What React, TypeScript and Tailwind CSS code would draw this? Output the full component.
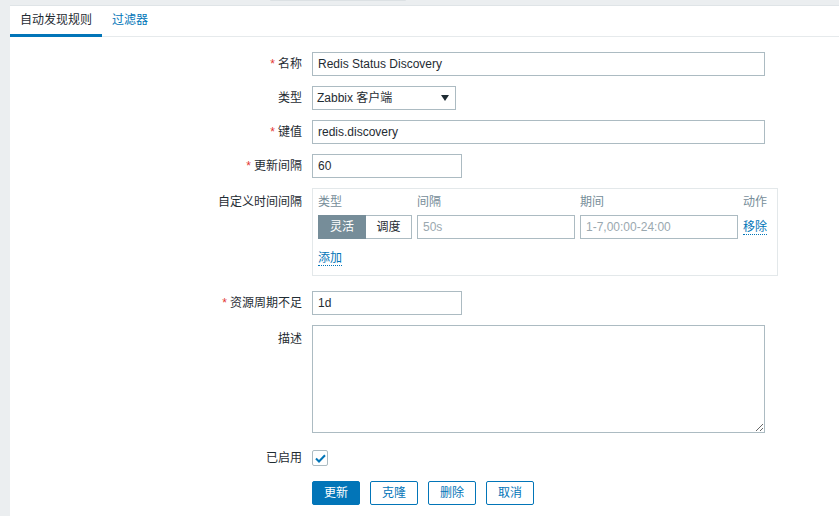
import { useState } from "react";

const FONT = { fontFamily: '"Liberation Sans", Arial, "Noto Sans CJK SC", sans-serif' };

function Label({ text, required, top }: { text: string; required?: boolean; top?: boolean }) {
  return (
    <div className={`w-[292px] shrink-0 pr-0 text-right text-[#1f2c33] leading-[24px] ${top ? "pt-[2px]" : ""}`}>
      {required && <span className="mr-[3px] text-[#e33734]">*</span>}
      {text}
    </div>
  );
}

function TextInput({ value, width, placeholder }: { value?: string; width: string; placeholder?: string }) {
  return (
    <div
      className={`${width} h-[24px] border border-[#acbbc2] bg-white px-[5px] leading-[22px] ${
        value ? "text-[#1f2c33]" : "text-[#9aa8af]"
      }`}
    >
      {value || placeholder}
    </div>
  );
}

export default function App() {
  const [enabled, setEnabled] = useState(true);
  const [mode, setMode] = useState<"flex" | "sched">("flex");

  return (
    <div className="min-h-[516px] w-[839px] overflow-hidden bg-[#ebeef0] text-[12px]" style={FONT}>
      <div className="h-[5px]">
        <div className="ml-[270px] h-[1px] w-[136px] rounded-b bg-[#dce1e4]" />
      </div>
      <div className="ml-[10px] min-h-[511px] border-t border-[#dfe4e7] bg-white">
        {/* tabs */}
        <div className="flex h-[31px] border-b border-[#e6eaec]">
          <div className="-mb-[1px] flex h-[31px] items-center border-b-[3px] border-[#0275b8] px-[10px] pb-[0px] text-[#1f2c33]">
            自动发现规则
          </div>
          <div className="flex h-[28px] items-center px-[10px] text-[#0275b8]">过滤器</div>
        </div>

        <div className="pt-[15px]">
          <div className="mb-[10px] flex gap-[10px]">
            <Label text="名称" required />
            <TextInput value="Redis Status Discovery" width="w-[453px]" />
          </div>

          <div className="mb-[10px] flex gap-[10px]">
            <Label text="类型" />
            <div className="flex h-[24px] w-[144px] items-center justify-between border border-[#acbbc2] bg-white pl-[4px] pr-[6px] text-[#1f2c33]">
              <span>Zabbix 客户端</span>
              <svg width="8" height="6" viewBox="0 0 8 6">
                <path d="M0 0 L8 0 L4 6 Z" fill="#1f2c33" />
              </svg>
            </div>
          </div>

          <div className="mb-[10px] flex gap-[10px]">
            <Label text="键值" required />
            <TextInput value="redis.discovery" width="w-[453px]" />
          </div>

          <div className="mb-[10px] flex gap-[10px]">
            <Label text="更新间隔" required />
            <TextInput value="60" width="w-[150px]" />
          </div>

          <div className="mb-[15px] flex gap-[10px]">
            <Label text="自定义时间间隔" top />
            <div className="h-[88px] w-[466px] border border-[#e3e8ea] px-[5px] pt-[5px]">
              <div className="grid grid-cols-[94px_158px_158px_auto] gap-x-[5px]">
                <div className="h-[16px] leading-[16px] text-[#768d99]">类型</div>
                <div className="h-[16px] leading-[16px] text-[#768d99]">间隔</div>
                <div className="h-[16px] leading-[16px] text-[#768d99]">期间</div>
                <div className="h-[16px] leading-[16px] text-[#768d99]">动作</div>
                <div className="mt-[5px] flex h-[24px]">
                  <button
                    onClick={() => setMode("flex")}
                    className={`h-[24px] w-[48px] border ${
                      mode === "flex"
                        ? "border-[#768d99] bg-[#768d99] text-white"
                        : "border-[#acbbc2] bg-white text-[#1f2c33]"
                    }`}
                  >
                    灵活
                  </button>
                  <button
                    onClick={() => setMode("sched")}
                    className={`h-[24px] w-[46px] border border-l-0 ${
                      mode === "sched"
                        ? "border-[#768d99] bg-[#768d99] text-white"
                        : "border-[#acbbc2] bg-white text-[#1f2c33]"
                    }`}
                  >
                    调度
                  </button>
                </div>
                <div className="mt-[5px]">
                  <TextInput placeholder="50s" width="w-[158px]" />
                </div>
                <div className="mt-[5px]">
                  <TextInput placeholder="1-7,00:00-24:00" width="w-[158px]" />
                </div>
                <div className="mt-[5px] leading-[24px]">
                  <span className="border-b border-dotted border-[#0275b8] leading-[14px] text-[#0275b8]">移除</span>
                </div>
              </div>
              <div className="mt-[11px] leading-[16px]">
                <span className="border-b border-dotted border-[#0275b8] text-[#0275b8]">添加</span>
              </div>
            </div>
          </div>

          <div className="mb-[10px] flex gap-[10px]">
            <Label text="资源周期不足" required />
            <TextInput value="1d" width="w-[150px]" />
          </div>

          <div className="mb-[13px] flex gap-[10px]">
            <Label text="描述" top />
            <textarea className="block h-[108px] w-[453px] resize border border-[#acbbc2] bg-white outline-none" />
          </div>

          <div className="mb-[11px] flex items-center gap-[10px]">
            <Label text="已启用" />
            <button
              onClick={() => setEnabled(!enabled)}
              className="flex h-[16px] w-[16px] items-center justify-center rounded-[2px] border border-[#acbbc2] bg-white"
            >
              {enabled && (
                <svg width="11" height="9" viewBox="0 0 11 9">
                  <path d="M1 4.5 L4 7.5 L10 1.2" fill="none" stroke="#0275b8" strokeWidth="2" />
                </svg>
              )}
            </button>
          </div>

          <div className="flex gap-[10px] pl-[302px]">
            <button className="h-[24px] w-[48px] rounded-[2px] border border-[#0275b8] bg-[#0275b8] text-white">更新</button>
            <button className="h-[24px] w-[48px] rounded-[2px] border border-[#0275b8] bg-white text-[#0275b8]">克隆</button>
            <button className="h-[24px] w-[48px] rounded-[2px] border border-[#0275b8] bg-white text-[#0275b8]">删除</button>
            <button className="h-[24px] w-[48px] rounded-[2px] border border-[#0275b8] bg-white text-[#0275b8]">取消</button>
          </div>
        </div>
      </div>
    </div>
  );
}
